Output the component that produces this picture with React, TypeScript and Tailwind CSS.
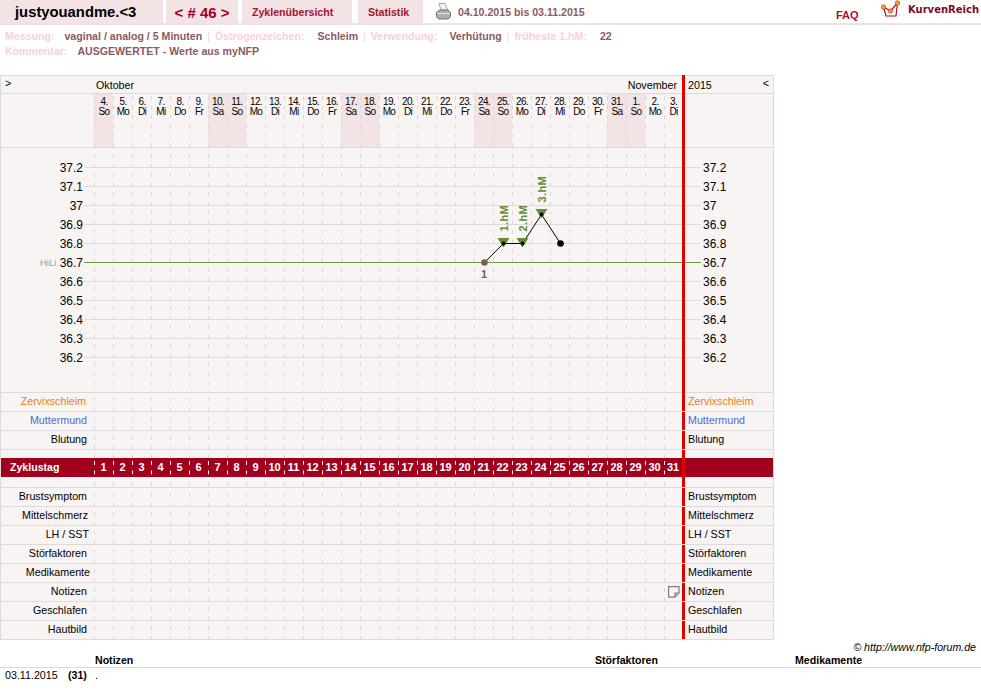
const font = "font-['Liberation_Sans',Arial,sans-serif]";
const days: [string, string, boolean][] = [
  ["4.", "So", true], ["5.", "Mo", false], ["6.", "Di", false], ["7.", "Mi", false], ["8.", "Do", false], ["9.", "Fr", false],
  ["10.", "Sa", true], ["11.", "So", true], ["12.", "Mo", false], ["13.", "Di", false], ["14.", "Mi", false], ["15.", "Do", false], ["16.", "Fr", false],
  ["17.", "Sa", true], ["18.", "So", true], ["19.", "Mo", false], ["20.", "Di", false], ["21.", "Mi", false], ["22.", "Do", false], ["23.", "Fr", false],
  ["24.", "Sa", true], ["25.", "So", true], ["26.", "Mo", false], ["27.", "Di", false], ["28.", "Mi", false], ["29.", "Do", false], ["30.", "Fr", false],
  ["31.", "Sa", true], ["1.", "So", true], ["2.", "Mo", false], ["3.", "Di", false],
];
const temps = ["37.2", "37.1", "37", "36.9", "36.8", "36.7", "36.6", "36.5", "36.4", "36.3", "36.2"];
const dash = "bg-[linear-gradient(#dcd7d7_4px,transparent_4px)] bg-[length:1px_9.5px] bg-repeat-y";
const dashWhite = "bg-[linear-gradient(#ffffff_4px,transparent_4px)] bg-[length:1px_9.5px] bg-repeat-y bg-[position:0_3px]";

function Cells({ offset = "bg-[position:0_5px]", children }: { offset?: string; children?: React.ReactNode }) {
  return (
    <div className="flex w-[588px] shrink-0 h-full">
      {days.map((_, i) => (
        <div key={i} className={`${i === 30 ? "w-[18px] relative" : "w-[19px]"} shrink-0 h-full ${dash} ${offset}`}>
          {i === 30 ? children : null}
        </div>
      ))}
    </div>
  );
}

function Row({ label, color = "text-black", pr = "pr-[7px]", note }: { label: string; color?: string; pr?: string; note?: boolean }) {
  return (
    <div className="flex h-[19px] border-b border-[#dedada] text-[10.7px]">
      <div className={`w-[93px] shrink-0 ${pr} text-right leading-[17px] whitespace-nowrap ${color}`}>{label}</div>
      <Cells>
        {note ? (
          <svg className="absolute left-[4px] top-[3px]" width="12" height="12" viewBox="0 0 12 12">
            <path d="M.6.6h10.4v6.4L7 11.2H.6z" fill="#f9f4f4" stroke="#7c7c7c" strokeWidth="1.2" />
            <path d="M10.6 7H7v4" fill="#cfcfcf" stroke="#7c7c7c" strokeWidth="1.2" />
          </svg>
        ) : null}
      </Cells>
      <div className="w-[91px] shrink-0 border-l-[3px] border-[#e00000] pl-[3px] leading-[17px]">
        <span className={color}>{label}</span>
      </div>
    </div>
  );
}

function Spacer({ h }: { h: string }) {
  return (
    <div className={`flex ${h}`}>
      <div className="w-[93px] shrink-0" />
      <Cells />
      <div className="w-[91px] shrink-0 border-l-[3px] border-[#e00000]" />
    </div>
  );
}

function HM({ text, className }: { text: string; className: string }) {
  return (
    <div className={`absolute w-[26px] h-[13px] leading-[13px] text-center text-[#5f8f35] font-bold whitespace-nowrap tracking-[0.4px] -rotate-90 ${className}`}>{text}</div>
  );
}

const Sep = () => <span className="ml-[5px] text-[#f8d2d5] font-normal">|</span>;

export default function App() {
  return (
    <div className={`${font} text-[11px] text-black bg-white w-[981px] h-[699px] overflow-hidden`}>
      <nav className="flex h-[25px] border-b-2 border-[#f3e1e3] font-bold text-[10.6px] text-[#a3152f]">
        <div className="w-[163px] h-[23px] bg-[#f3e3e5] pl-[15px] text-[14.8px] leading-[25px] text-black">justyouandme.&lt;3</div>
        <div className="ml-[3px] w-[72px] h-[23px] bg-[#f3e3e5] text-center text-[15px] leading-[25px] text-[#a0001e]">&lt; # 46 &gt;</div>
        <div className="ml-[4px] w-[110px] h-[23px] bg-[#f3e3e5] pl-[10px] leading-[24px]">Zyklenübersicht</div>
        <div className="ml-[6px] w-[65px] h-[23px] bg-[#f3e3e5] pl-[10px] leading-[24px]">Statistik</div>
        <svg className="ml-[13px] mt-[3px] shrink-0" width="15" height="17" viewBox="0 0 15 17">
          <path d="M3 .5h6l2.500 6.500H5z" fill="#f4f7f9" stroke="#94a8b6" />
          <path d="M.5 9.500L3.500 7h8.500l2.500 2.500v4L12.500 16h-10L.5 13.500z" fill="#a9aeb2" stroke="#6f7478" />
          <path d="M1.500 10.500h12" stroke="#e2e5e7" />
        </svg>
        <div className="ml-[7px] w-[378px] leading-[24px] text-[#8b5a62]">04.10.2015 bis 03.11.2015</div>
        <div className="w-[45px] pt-[8px] leading-[14px] text-[11px]">FAQ</div>
        <svg className="shrink-0" width="22" height="20" viewBox="0 0 22 20">
          <path d="M1 15.500h2M6 17v2M12 17v2M17 15.500h3" stroke="#ddd" />
          <path d="M2.500 7l2.500 9h10L16.500 3" fill="#fff" stroke="#a01030" strokeWidth="1.2" />
          <path d="M2.500 7l7 4 7-8" fill="none" stroke="#a01030" strokeWidth="1.2" />
          <circle cx="2.500" cy="7" r="2.300" fill="#f0a020" stroke="#c03020" strokeWidth=".6" />
          <circle cx="9.500" cy="11" r="2.300" fill="#f0a020" stroke="#c03020" strokeWidth=".6" />
          <circle cx="16.500" cy="3" r="2.300" fill="#f0a020" stroke="#c03020" strokeWidth=".6" />
        </svg>
        <div className="ml-[5px] font-['DejaVu_Sans',sans-serif] text-[10px] leading-[20px] text-[#7d0a22] whitespace-nowrap">KurvenReich</div>
      </nav>

      <div className="h-[50px] pl-[5px] pt-[4px] font-bold text-[10.6px] leading-[15px] text-[#8b5a62]">
        <div className="flex whitespace-pre">
          <span className="text-[#f8d2d5]">Messung:</span><span className="ml-[10px]">vaginal / analog / 5 Minuten</span>
          <Sep /><span className="ml-[5px] text-[#f8d2d5]">Östrogenzeichen:</span><span className="ml-[13px]">Schleim</span>
          <Sep /><span className="ml-[5px] text-[#f8d2d5]">Verwendung:</span><span className="ml-[12px]">Verhütung</span>
          <Sep /><span className="ml-[5px] text-[#f8d2d5]">früheste 1.hM:</span><span className="ml-[13px]">22</span>
        </div>
        <div className="flex">
          <span className="text-[#f8d2d5]">Kommentar:</span><span className="ml-[10px]">AUSGEWERTET - Werte aus myNFP</span>
        </div>
      </div>

      <div className="w-[774px] border-x border-t border-[#dedada] bg-[#f9f4f4]">
        <div className="relative">
          <div className="absolute left-[681px] -top-px bottom-0 w-[3px] bg-[#e00000] z-10" />
          <div className="flex h-[18px] border-b border-[#dedada] leading-[19px] text-[10.7px]">
            <div className="w-[93px] shrink-0 pl-[4px] leading-[15px]">&gt;</div>
            <div className="w-[588px] shrink-0 flex justify-between pl-[2px] pr-[5px]"><span>Oktober</span><span>November</span></div>
            <div className="w-[91px] shrink-0 pl-[6px] pr-[4px] flex justify-between"><span>2015</span><span className="leading-[15px]">&lt;</span></div>
          </div>

          <div className="flex h-[54px] border-b border-[#dedada]">
            <div className="w-[93px] shrink-0" />
            <div className="flex w-[588px] shrink-0">
              {days.map((d, i) => (
                <div key={i} className={`${i === 30 ? "w-[18px]" : "w-[19px]"} shrink-0 pl-[1px] ${dash} bg-[position:0_2px] text-center text-[10px] tracking-[-0.6px] leading-[10px] pt-[3px] ${d[2] ? "bg-[#f3e3e5]" : ""}`}>
                  <div>{d[0]}</div>
                  <div>{d[1]}</div>
                </div>
              ))}
            </div>
          </div>

          <div className="flex h-[245px] border-b border-[#dedada]">
            <div className="w-[681px] shrink-0 relative pt-[10px]">
              <div className="absolute inset-y-0 left-[93px]"><Cells offset="bg-[position:0_6px]" /></div>
              {temps.map((t) => (
                <div key={t} className="relative flex h-[19px] items-center">
                  <div className="w-[83px] shrink-0 pr-[1px] text-right text-[12px]">{t}</div>
                  <div className={`flex-1 h-px ${t === "36.7" ? "bg-[#6f9a3a]" : "bg-[#dedada]"}`} />
                  {t === "36.7" ? <div className="absolute left-[39px] top-[3px] text-[9.5px] text-[#8fa878]">HiLi</div> : null}
                </div>
              ))}
              <svg className="absolute left-[469px] top-[42px]" width="110" height="100" viewBox="470 190 110 100">
                <path d="M484.500 262.500L503.500 243.500H522.500L541.500 214.500L560.500 243.500" fill="none" stroke="#000" strokeWidth="1" />
                {[[503.5, 238], [522.5, 238], [541.5, 209]].map(([x, y]) => (
                  <path key={x} d={`M${x - 6} ${y}h12l-6 9.500z`} fill="#5f8f35" />
                ))}
                <circle cx="484.500" cy="262.500" r="3.300" fill="#7a5a5e" />
                {[[503.5, 243.5], [522.5, 243.5], [541.5, 214.5]].map(([x, y]) => (
                  <circle key={x} cx={x} cy={y} r="2" fill="#000" />
                ))}
                <circle cx="560.500" cy="243.500" r="3.300" fill="#000" />
              </svg>
              <HM text="1.hM" className="left-[490px] top-[64px]" />
              <HM text="2.hM" className="left-[509px] top-[64px]" />
              <HM text="3.hM" className="left-[528px] top-[35px]" />
              <div className="absolute left-[480px] top-[118px] font-bold text-[#7a5a5e]">1</div>
            </div>
            <div className="w-[91px] shrink-0 pl-[3px] pt-[10px]">
              {temps.map((t) => (
                <div key={t} className="flex h-[19px] items-center">
                  <div className={`w-[16px] h-px shrink-0 ${t === "36.7" ? "bg-[#6f9a3a]" : "bg-[#dedada]"}`} />
                  <div className="ml-[2px] text-[12px]">{t}</div>
                </div>
              ))}
            </div>
          </div>
        </div>

        <Row label="Zervixschleim" color="text-[#f07d10]" pr="pr-[8px]" />
        <Row label="Muttermund" color="text-[#4f6bc8]" />
        <Row label="Blutung" />
        <Spacer h="h-[8px]" />

        <div className="flex h-[19px] bg-[#a0001e] font-bold text-white">
          <div className="w-[93px] shrink-0 pl-[9px] leading-[19px] text-[10.6px]">Zyklustag</div>
          <div className="flex w-[588px] shrink-0">
            {days.map((_, i) => (
              <div key={i} className={`${i === 30 ? "w-[18px]" : "w-[19px]"} shrink-0 ${dashWhite} text-center leading-[19px]`}>{i + 1}</div>
            ))}
          </div>
          <div className="w-[91px] shrink-0 border-l-[3px] border-[#e00000]" />
        </div>

        <div className="flex h-[11px] border-b border-[#dedada]">
          <div className="w-[93px] shrink-0" />
          <Cells />
          <div className="w-[91px] shrink-0 border-l-[3px] border-[#e00000]" />
        </div>

        <Row label="Brustsymptom" />
        <Row label="Mittelschmerz" pr="pr-[6px]" />
        <Row label="LH / SST" pr="pr-[5px]" />
        <Row label="Störfaktoren" />
        <Row label="Medikamente" pr="pr-[4px]" />
        <Row label="Notizen" note />
        <Row label="Geschlafen" />
        <Row label="Hautbild" />
      </div>

      <div className="h-[14px] pr-[5px] text-right italic text-[10.6px] leading-[14px]">© http://www.nfp-forum.de</div>
      <div className="flex h-[14px] border-b border-[#dedada] font-bold text-[10.6px] leading-[13px]">
        <div className="w-[95px]" />
        <div className="w-[500px]">Notizen</div>
        <div className="w-[200px]">Störfaktoren</div>
        <div>Medikamente</div>
      </div>
      <div className="flex leading-[14px] text-[10.7px]">
        <div className="w-[68px] pl-[5px]">03.11.2015</div>
        <div className="w-[27px] font-bold text-[10.6px]">(31)</div>
        <div>.</div>
      </div>
    </div>
  );
}
